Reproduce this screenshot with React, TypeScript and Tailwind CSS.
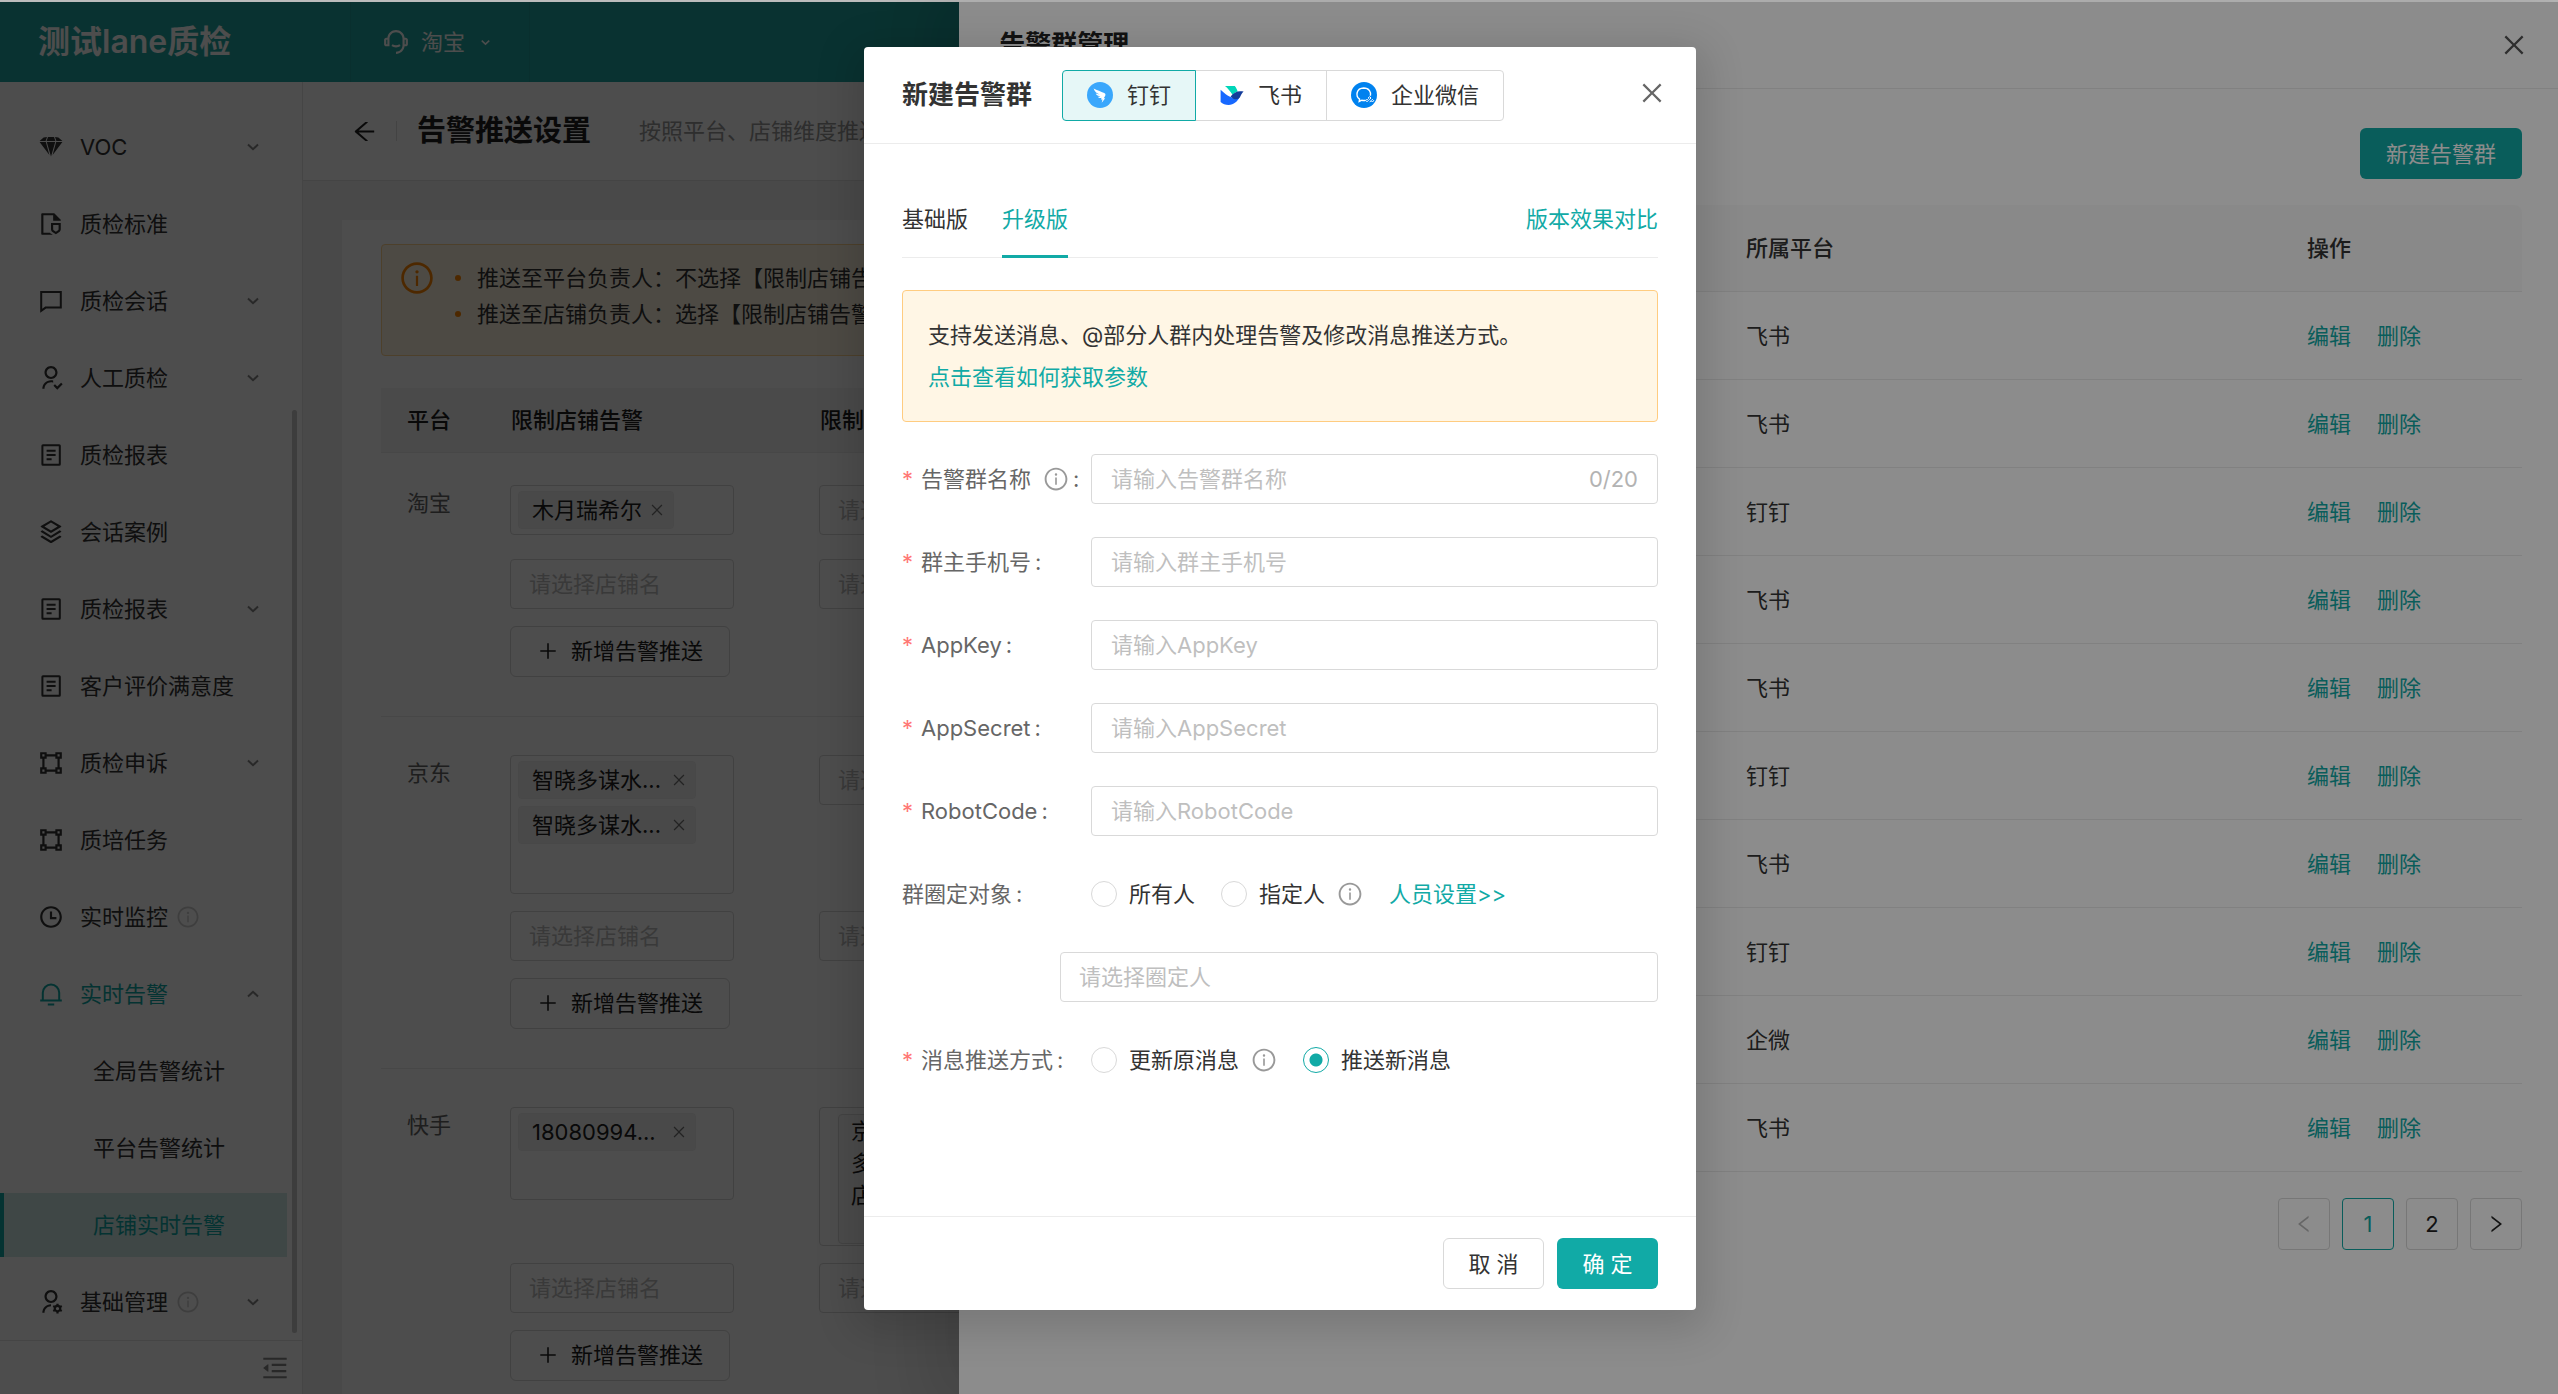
import { useState } from 'react';
import type { ReactNode } from 'react';
import {
  AiOutlineArrowLeft,
  AiOutlineClose,
  AiOutlineInfoCircle,
  AiOutlineLeft,
  AiOutlineMenuFold,
  AiOutlinePlus,
  AiOutlineRight,
} from 'react-icons/ai';
import {
  RiCustomerService2Line,
  RiFileShield2Line,
  RiShape2Line,
  RiStackLine,
  RiTimeLine,
  RiUserFollowLine,
  RiUserSettingsLine,
} from 'react-icons/ri';

function GemIcon() {
  return (
    <svg width="26" height="26" viewBox="0 0 26 26" fill="currentColor">
      <path d="M5.6 3.4 9 3l-1.4 3.9H1.6zM10 3h6l1.4 3.9H8.6zM17 3l3.4.4 4 3.5h-6zM1.6 8h6.2l3.6 13zM8.8 8h8.4L13 22.6zM18.2 8h6.2l-9.8 13z" />
    </svg>
  );
}

function ChatIcon() {
  return (
    <svg width="26" height="26" viewBox="0 0 26 26" fill="none" stroke="currentColor" strokeWidth="2">
      <path d="M3.2 4h19.6v15.6H7.6l-4.4 3.2z" />
    </svg>
  );
}

function ReportIcon() {
  return (
    <svg width="26" height="26" viewBox="0 0 26 26" fill="none" stroke="currentColor" strokeWidth="2">
      <rect x="4.4" y="3.2" width="17.4" height="19.6" rx="0.6" />
      <path d="M8.6 8.8h9M8.6 13h9M8.6 17.2h5" />
    </svg>
  );
}

function BellIcon() {
  return (
    <svg width="26" height="26" viewBox="0 0 26 26" fill="none" stroke="currentColor" strokeWidth="2">
      <path d="M4.8 19v-7.200a8.200 8.200 0 0 1 16.400 0V19M2.200 19.600h21.600M9.800 23.600h6.400" />
    </svg>
  );
}

function Chevron({ up = false, size = 12 }: { up?: boolean; size?: number }) {
  return (
    <svg width={size} height={size} viewBox="0 0 12 12" fill="none" stroke="currentColor" strokeWidth="2">
      <path d={up ? 'M1 8.500 6 3.800 11 8.500' : 'M1 3.500 6 8.200 11 3.500'} />
    </svg>
  );
}

function DingTalkLogo() {
  return (
    <svg width="26" height="26" viewBox="0 0 26 26">
      <circle cx="13" cy="13" r="13" fill="#3aa7fc" />
      <path
        fill="#fff"
        d="M6.600 6.600c3.200 1.700 7.400 3 10.600 4.500 1.200.6 1.500 1.300 1.100 2.400-.4 1-1 1.900-1.600 2.800h1.500l-3.500 4.400.8-3.200h-1.700l.9-1.700c-1.500.4-2.900.4-4-1.100 1 .1 1.800.1 2.700-.1-2-.5-3.900-1.100-4.700-3 1.300.4 2.600.7 4 .8-2.600-1-5-2.200-6.100-5.800z"
      />
    </svg>
  );
}

function FeishuLogo() {
  return (
    <svg width="24" height="24" viewBox="0 0 24 24">
      <path fill="#00d6b9" d="M5 3h9.800c1.400 1.700 2.300 3.500 2.800 5.500-1.800.5-3.300 1.600-5.100 3.300C10.300 8.200 7.800 5.300 5 3z" />
      <path fill="#1768ff" d="M.6 6.800c4.500 4.400 9.200 7.800 15.200 8.600 1.600 0 3-.5 4-1.600-2.300 4.700-6 8.200-11.200 8.200-3.200 0-6-1.200-8-3z" />
      <path fill="#133c9a" d="M10.600 13.600c3.400-4.400 7.300-6.300 13-5-1.800 1.500-2.400 3.300-3.400 5.200-1.600 2.600-4.300 3-6.800 2z" />
    </svg>
  );
}

function WeComLogo() {
  return (
    <svg width="26" height="26" viewBox="0 0 26 26" fill="none">
      <circle cx="13" cy="13" r="13" fill="#0082ef" />
      <path
        stroke="#fff"
        strokeWidth="1.400"
        d="M14.600 18.200c-1.100.3-2.500.3-3.700 0l-2.700 1.300.4-2.300C4.200 14.200 5.200 6.200 12.700 6c5.400 0 7.700 4.300 6.700 7.800"
      />
      <path
        stroke="#fff"
        strokeWidth="1"
        strokeLinejoin="round"
        d="m18.600 14.600 1.400 1.400-1.400 1.400-1.400-1.400zM21.400 17.400l1.300 1.300-1.300 1.300-1.300-1.300zM18.600 20.200l1.300-1.300M16 17.200l1.300 1.300-1.300 1.300-1.200-1.300z"
      />
    </svg>
  );
}

type NavItem = {
  label: string;
  icon?: ReactNode;
  arrow?: 'up' | 'down';
  info?: boolean;
  open?: boolean;
  active?: boolean;
};

const navItems: NavItem[] = [
  { label: 'VOC', icon: <GemIcon />, arrow: 'down' },
  { label: '质检标准', icon: <RiFileShield2Line size={26} /> },
  { label: '质检会话', icon: <ChatIcon />, arrow: 'down' },
  { label: '人工质检', icon: <RiUserFollowLine size={26} />, arrow: 'down' },
  { label: '质检报表', icon: <ReportIcon /> },
  { label: '会话案例', icon: <RiStackLine size={26} /> },
  { label: '质检报表', icon: <ReportIcon />, arrow: 'down' },
  { label: '客户评价满意度', icon: <ReportIcon /> },
  { label: '质检申诉', icon: <RiShape2Line size={26} />, arrow: 'down' },
  { label: '质培任务', icon: <RiShape2Line size={26} /> },
  { label: '实时监控', icon: <RiTimeLine size={26} />, info: true },
  { label: '实时告警', icon: <BellIcon />, arrow: 'up', open: true },
  { label: '全局告警统计' },
  { label: '平台告警统计' },
  { label: '店铺实时告警', active: true },
  { label: '基础管理', icon: <RiUserSettingsLine size={26} />, arrow: 'down', info: true },
];

function Sidebar() {
  return (
    <aside className="relative flex w-[303px] shrink-0 flex-col border-r border-[#e8e8e8] bg-white">
      <nav className="flex flex-1 flex-col gap-[13px] overflow-hidden pt-[33px] pr-[15px]">
        {navItems.map((item, i) => (
          <a
            key={i}
            href="#"
            className={`flex h-16 shrink-0 items-center border-l-4 pr-7 ${
              item.active
                ? 'border-[#11aaa6] bg-[#d3ecea] text-[#11aaa6]'
                : item.open
                  ? 'border-transparent text-[#11aaa6]'
                  : 'border-transparent text-[#333]'
            } ${item.icon ? 'pl-[34px]' : 'pl-[89px]'}`}
          >
            {item.icon && <span className="mr-4">{item.icon}</span>}
            <span>{item.label}</span>
            {item.info && <AiOutlineInfoCircle size={24} className="ml-2 text-[#d0d0d0]" />}
            {item.arrow && (
              <span className="ml-auto text-[#888]">
                <Chevron up={item.arrow === 'up'} />
              </span>
            )}
          </a>
        ))}
      </nav>
      <div className="absolute top-[328px] right-[5px] bottom-[61px] w-[5px] rounded-full bg-[#cacaca]" />
      <div className="flex h-[54px] shrink-0 items-center justify-end border-t border-[#e8e8e8] pr-3 text-[#888]">
        <button type="button" aria-label="收起菜单">
          <AiOutlineMenuFold size={30} />
        </button>
      </div>
    </aside>
  );
}

function Tag({ text, wide }: { text: string; wide?: boolean }) {
  return (
    <span
      className={`flex h-[38px] items-center justify-between rounded-sm border border-[#f0f0f0] bg-[#f5f5f5] pr-2 pl-[13px] text-[#222] ${
        wide ? 'w-[178px]' : 'w-[156px]'
      }`}
    >
      {text}
      <button type="button" aria-label="移除" className="text-[#777]">
        <AiOutlineClose size={16} />
      </button>
    </span>
  );
}

function EmptySelect({ label }: { label: string }) {
  return (
    <select
      aria-label={label}
      className="h-[50px] w-56 shrink-0 appearance-none rounded-sm border border-[#d9d9d9] bg-white px-[18px] text-[#bfbfbf]"
    >
      <option>{label}</option>
    </select>
  );
}

type PushRow = { platform: string; tags: string[]; wide?: boolean; padClass: string; boxClass: string; gapClass: string; person?: string };

const pushRows: PushRow[] = [
  { platform: '淘宝', tags: ['木月瑞希尔'], padClass: 'pt-8', boxClass: 'h-[50px]', gapClass: 'mb-6' },
  { platform: '京东', tags: ['智晓多谋水...', '智晓多谋水...'], wide: true, padClass: 'pt-[38px]', boxClass: 'h-[139px]', gapClass: 'mb-[17px]' },
  { platform: '快手', tags: ['18080994...'], wide: true, padClass: 'pt-[38px]', boxClass: 'h-[93px]', gapClass: 'mb-[17px]', person: '京多店' },
];

function PushTable() {
  return (
    <table className="mt-8 w-full table-fixed border-collapse text-left">
      <thead>
        <tr className="h-16 border-b border-[#ececec] bg-[#f7f7f7] text-[#222]">
          <th className="w-[104px] pl-[26px] font-medium">平台</th>
          <th className="w-[309px] pl-[26px] font-medium">限制店铺告警</th>
          <th className="pl-[26px] font-medium">限制人员</th>
        </tr>
      </thead>
      <tbody>
        {pushRows.map((row) => (
          <tr key={row.platform} className="border-b border-[#ececec] align-top">
            <td className={`pl-[26px] leading-9 text-[#666] ${row.padClass}`}>{row.platform}</td>
            <td colSpan={2} className={`pb-[39px] pl-[25px] ${row.padClass}`}>
              <div className={`flex items-start gap-[85px] ${row.gapClass}`}>
                <div
                  className={`flex w-56 shrink-0 flex-col gap-[7px] rounded-sm border border-[#d9d9d9] px-[7px] py-[5px] ${row.boxClass}`}
                >
                  {row.tags.map((tag, i) => (
                    <Tag key={i} text={tag} wide={row.wide} />
                  ))}
                </div>
                {row.person ? (
                  <div className="h-[139px] w-56 shrink-0 rounded-sm border border-[#d9d9d9] pt-[6px] pr-4 pb-px pl-[18px]">
                    <div className="h-full rounded-sm border border-[#e0e0e0] bg-[#f9f9f9] pl-3 text-[#222]">
                      {row.person.split('').map((c) => (
                        <div key={c} className="leading-8">{c}</div>
                      ))}
                    </div>
                  </div>
                ) : (
                  <EmptySelect label="请选择人员" />
                )}
              </div>
              <div className="mb-[17px] flex gap-[85px]">
                <EmptySelect label="请选择店铺名" />
                <EmptySelect label="请选择人员" />
              </div>
              <button
                type="button"
                className="flex h-[51px] w-[220px] items-center justify-center gap-3 rounded-md border border-[#d9d9d9] text-[#222]"
              >
                <AiOutlinePlus size={22} />
                新增告警推送
              </button>
            </td>
          </tr>
        ))}
      </tbody>
    </table>
  );
}

function MainPage() {
  return (
    <main className="flex min-w-0 flex-1 flex-col bg-[#f3f3f3]">
      <div className="flex h-[99px] shrink-0 items-center border-b border-[#e4e4e4] bg-white pl-12">
        <button type="button" aria-label="返回" className="text-[#222]">
          <AiOutlineArrowLeft size={27} />
        </button>
        <span className="ml-[18px] h-5 w-px bg-[#e0e0e0]" />
        <h1 className="ml-5 text-[29px] font-bold text-[#222]">告警推送设置</h1>
        <span className="ml-12 text-[#999]">按照平台、店铺维度推送</span>
      </div>
      <div className="mt-[39px] ml-[39px] bg-white px-[39px] pt-6">
        <div className="flex h-28 items-start rounded border border-[#ffd591] bg-[#fff7e3] pt-[15px] pl-[17px] text-[#333]">
          <AiOutlineInfoCircle size={36} className="text-[#ff8800]" />
          <ul className="ml-5 list-none leading-9">
            <li className="flex items-center gap-4">
              <span className="size-[6px] rounded-full bg-[#ff8800]" />
              推送至平台负责人：不选择【限制店铺告警】
            </li>
            <li className="flex items-center gap-4">
              <span className="size-[6px] rounded-full bg-[#ff8800]" />
              推送至店铺负责人：选择【限制店铺告警】
            </li>
          </ul>
        </div>
        <PushTable />
      </div>
    </main>
  );
}

const groupPlatforms = ['飞书', '飞书', '钉钉', '飞书', '飞书', '钉钉', '飞书', '钉钉', '企微', '飞书'];

function GroupDrawer() {
  return (
    <section className="absolute inset-y-0 right-0 w-5/8 bg-white shadow-[-12px_0_60px_16px_rgba(0,0,0,0.12)]">
      <header className="flex h-[87px] items-center justify-between border-b border-[#ececec] pr-[30px] pl-10">
        <h2 className="text-[26px] font-bold text-[#222]">告警群管理</h2>
        <button type="button" aria-label="关闭" className="text-[#555]">
          <AiOutlineClose size={28} />
        </button>
      </header>
      <div className="flex flex-col items-end pt-[39px] pr-9 pl-10">
        <button type="button" className="h-[51px] w-[162px] rounded-md bg-[#11aaa6] text-white">
          新建告警群
        </button>
        <table className="mt-[26px] w-full table-fixed border-separate border-spacing-0 text-left text-[#333]">
          <thead>
            <tr className="h-[87px]">
              <th className="rounded-tl-lg border-b border-[#ececec] bg-[#fafafa]" />
              <th className="w-[561px] border-b border-[#ececec] bg-[#fafafa] pl-[26px] font-medium">所属平台</th>
              <th className="w-[241px] rounded-tr-lg border-b border-[#ececec] bg-[#fafafa] pl-[26px] font-medium">操作</th>
            </tr>
          </thead>
          <tbody>
            {groupPlatforms.map((platform, i) => (
              <tr key={i} className="h-[88px]">
                <td className="border-b border-[#ececec]" />
                <td className="border-b border-[#ececec] pl-[26px]">{platform}</td>
                <td className="border-b border-[#ececec] pl-[26px] text-[#11aaa6]">
                  <a href="#" className="mr-[26px]">编辑</a>
                  <a href="#">删除</a>
                </td>
              </tr>
            ))}
          </tbody>
        </table>
        <div className="mt-[26px] flex gap-3">
          <button type="button" aria-label="上一页" className="flex size-[52px] items-center justify-center rounded-sm border border-[#d9d9d9] text-[#bbb]">
            <AiOutlineLeft size={22} />
          </button>
          <button type="button" className="size-[52px] rounded-sm border border-[#11aaa6] text-[#11aaa6]">1</button>
          <button type="button" className="size-[52px] rounded-sm border border-[#d9d9d9] text-[#222]">2</button>
          <button type="button" aria-label="下一页" className="flex size-[52px] items-center justify-center rounded-sm border border-[#d9d9d9] text-[#222]">
            <AiOutlineRight size={22} />
          </button>
        </div>
      </div>
    </section>
  );
}

function FieldLabel({ id, text, required = true, info }: { id?: string; text: string; required?: boolean; info?: boolean }) {
  return (
    <label htmlFor={id} className="flex w-[189px] shrink-0 items-center text-[#666]">
      {required && <span className="mr-[7px] w-3 text-[#ff7875]">*</span>}
      {text}
      {info && <AiOutlineInfoCircle size={26} className="ml-3 text-[#999]" />}
      <span className="ml-1">:</span>
    </label>
  );
}

function RadioOption({ name, value, checked, onChange, children }: {
  name: string;
  value: string;
  checked: boolean;
  onChange: (v: string) => void;
  children?: ReactNode;
}) {
  return (
    <label className="mr-[26px] flex items-center text-[#333]">
      <input
        type="radio"
        name={name}
        checked={checked}
        onChange={() => onChange(value)}
        className="mr-3 size-[26px] appearance-none rounded-full border border-[#d9d9d9] checked:border-[#11aaa6] checked:bg-[radial-gradient(circle,#11aaa6_6px,transparent_7px)]"
      />
      {value}
      {children}
    </label>
  );
}

const channels = [
  { name: '钉钉', logo: <DingTalkLogo /> },
  { name: '飞书', logo: <FeishuLogo /> },
  { name: '企业微信', logo: <WeComLogo /> },
];

const fields = [
  { id: 'name', label: '告警群名称', placeholder: '请输入告警群名称', info: true, limit: 20 },
  { id: 'phone', label: '群主手机号', placeholder: '请输入群主手机号' },
  { id: 'appKey', label: 'AppKey', placeholder: '请输入AppKey' },
  { id: 'appSecret', label: 'AppSecret', placeholder: '请输入AppSecret' },
  { id: 'robotCode', label: 'RobotCode', placeholder: '请输入RobotCode' },
];

function CreateGroupModal() {
  const [channel, setChannel] = useState('钉钉');
  const [values, setValues] = useState<Record<string, string>>({});
  const [target, setTarget] = useState('');
  const [pushMode, setPushMode] = useState('推送新消息');

  return (
    <div
      role="dialog"
      aria-label="新建告警群"
      className="w-[832px] rounded bg-white shadow-[0_10px_40px_10px_rgba(0,0,0,0.14)]"
    >
      <header className="flex h-[97px] items-center border-b border-[#ececec] pr-[30px] pl-[38px]">
        <h2 className="text-[26px] font-bold text-[#333]">新建告警群</h2>
        <div className="ml-[30px] flex h-[51px]">
          {channels.map((c) => (
            <label
              key={c.name}
              className={`flex items-center gap-3.5 border px-6 text-[#333] not-first:-ml-px first:rounded-l last:rounded-r ${
                channel === c.name ? 'z-10 border-[#11aaa6] bg-[#e6f7f7]' : 'border-[#d9d9d9]'
              }`}
            >
              <input
                type="radio"
                name="channel"
                className="sr-only"
                checked={channel === c.name}
                onChange={() => setChannel(c.name)}
              />
              {c.logo}
              {c.name}
            </label>
          ))}
        </div>
        <button type="button" aria-label="关闭" className="ml-auto pb-1 text-[#666]">
          <AiOutlineClose size={28} />
        </button>
      </header>

      <div className="px-[38px] pt-9 pb-[131px]">
        <div className="flex h-[78px] justify-between border-b border-[#ececec]">
          <div className="flex gap-[34px]">
            <button type="button" className="text-[#333]">基础版</button>
            <button type="button" className="-mb-px border-y-[3px] border-t-transparent border-b-[#11aaa6] text-[#11aaa6]">
              升级版
            </button>
          </div>
          <a href="#" className="self-center text-[#11aaa6]">版本效果对比</a>
        </div>

        <div className="mt-8 rounded-sm border border-[#ffcc80] bg-[#fff6e5] px-[25px] py-[23px] leading-[42px] text-[#333]">
          <p>支持发送消息、@部分人群内处理告警及修改消息推送方式。</p>
          <a href="#" className="block text-[#11aaa6]">点击查看如何获取参数</a>
        </div>

        <form className="mt-8 flex flex-col gap-[33px]">
          {fields.map((f) => (
            <div key={f.id} className="flex h-[50px] items-center">
              <FieldLabel id={f.id} text={f.label} info={f.info} />
              <div className="flex h-full min-w-0 flex-1 items-center rounded-sm border border-[#d9d9d9] px-[19px]">
                <input
                  id={f.id}
                  type="text"
                  value={values[f.id] ?? ''}
                  maxLength={f.limit}
                  placeholder={f.placeholder}
                  onChange={(e) => setValues({ ...values, [f.id]: e.target.value })}
                  className="min-w-0 flex-1 text-[#333] outline-none placeholder:text-[#bfbfbf]"
                />
                {f.limit && <span className="text-[#b3b3b3]">{(values[f.id] ?? '').length}/{f.limit}</span>}
              </div>
            </div>
          ))}

          <div className="flex h-[50px] items-center">
            <FieldLabel text="群圈定对象" required={false} />
            <RadioOption name="target" value="所有人" checked={target === '所有人'} onChange={setTarget} />
            <RadioOption name="target" value="指定人" checked={target === '指定人'} onChange={setTarget}>
              <AiOutlineInfoCircle size={26} className="ml-3 text-[#999]" />
            </RadioOption>
            <a href="#" className="text-[#11aaa6]">人员设置&gt;&gt;</a>
          </div>

          <select
            aria-label="请选择圈定人"
            className="ml-[158px] h-[50px] appearance-none rounded-sm border border-[#d9d9d9] px-[18px] text-[#bfbfbf]"
          >
            <option>请选择圈定人</option>
          </select>

          <div className="flex h-[50px] items-center">
            <FieldLabel text="消息推送方式" />
            <RadioOption name="pushMode" value="更新原消息" checked={pushMode === '更新原消息'} onChange={setPushMode}>
              <AiOutlineInfoCircle size={26} className="ml-3 text-[#999]" />
            </RadioOption>
            <RadioOption name="pushMode" value="推送新消息" checked={pushMode === '推送新消息'} onChange={setPushMode} />
          </div>
        </form>
      </div>

      <footer className="flex justify-end gap-[13px] border-t border-[#ececec] px-[38px] py-[21px]">
        <button type="button" className="h-[51px] w-[101px] rounded-md border border-[#d9d9d9] text-[#333]">取 消</button>
        <button type="button" className="h-[51px] w-[101px] rounded-md bg-[#11aaa6] text-white">确 定</button>
      </footer>
    </div>
  );
}

export default function App() {
  return (
    <div className="flex h-screen flex-col overflow-hidden font-[Inter,'Noto_Sans_CJK_SC',sans-serif] text-[22px] leading-8">
      <div className="h-0.5 shrink-0 bg-[#bcbcbc]" />
      <div className="relative flex min-h-0 flex-1 flex-col">
        <header className="flex h-20 shrink-0 items-center bg-[#22a8a2] text-white">
          <div className="w-[350px] pl-[38px] text-[32px] font-semibold">测试lane质检</div>
          <button type="button" className="flex h-full w-[180px] items-center border-x border-black/5 pl-8">
            <RiCustomerService2Line size={26} />
            <span className="mr-4 ml-3">淘宝</span>
            <Chevron size={9} />
          </button>
        </header>
        <div className="flex min-h-0 flex-1">
          <Sidebar />
          <MainPage />
        </div>

        <div className="absolute inset-0 bg-black/45" />
        <GroupDrawer />
        <div className="absolute inset-0 flex items-start justify-center bg-black/45 pt-[45px] pl-0.5">
          <CreateGroupModal />
        </div>
      </div>
    </div>
  );
}
